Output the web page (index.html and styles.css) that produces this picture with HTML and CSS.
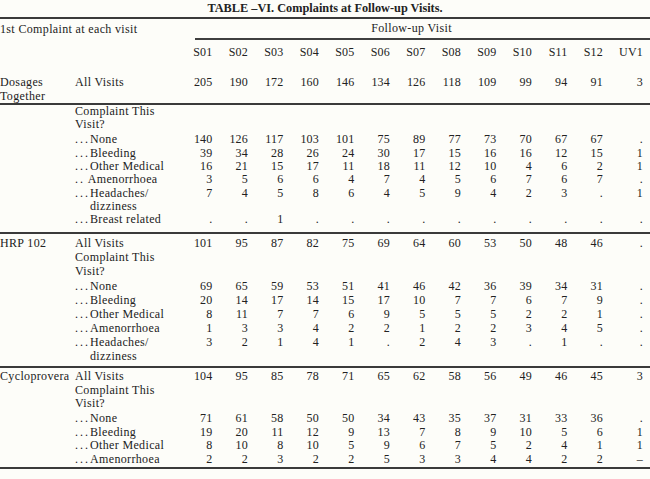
FILE: index.html
```html
<!DOCTYPE html>
<html lang="en">
<head>
<meta charset="utf-8">
<title>TABLE –VI. Complaints at Follow-up Visits.</title>
<link rel="stylesheet" href="styles.css">
</head>
<body>
<div class="page">
  <h1 class="title">TABLE –VI. Complaints at Follow-up Visits.</h1>
  <table class="t">
    <colgroup>
      <col class="c-grp"><col class="c-lbl">
      <col class="c-n"><col class="c-n"><col class="c-n"><col class="c-n"><col class="c-n"><col class="c-n">
      <col class="c-n"><col class="c-n"><col class="c-n"><col class="c-n"><col class="c-n"><col class="c-n">
      <col class="c-last">
    </colgroup>
    <thead>
      <tr class="cap">
        <th colspan="2" class="cap-l">1st Complaint at each visit</th>
        <th colspan="13" class="fv"><div>Follow-up Visit</div></th>
      </tr>
      <tr class="hdr">
        <th colspan="2"></th>
        <th class="n">S01</th><th class="n">S02</th><th class="n">S03</th><th class="n">S04</th><th class="n">S05</th><th class="n">S06</th>
        <th class="n">S07</th><th class="n">S08</th><th class="n">S09</th><th class="n">S10</th><th class="n">S11</th><th class="n">S12</th><th class="n">UV1</th>
      </tr>
    </thead>
    <tbody class="g0">
      <tr class="lead end">
        <td>Dosages<br>Together</td><td>All Visits</td>
        <td class="n">205</td><td class="n">190</td><td class="n">172</td><td class="n">160</td><td class="n">146</td><td class="n">134</td><td class="n">126</td><td class="n">118</td><td class="n">109</td><td class="n">99</td><td class="n">94</td><td class="n">91</td><td class="n">3</td>
      </tr>
    </tbody>
    <tbody class="g1">
      <tr><td></td><td>Complaint This</td><td colspan="13"></td></tr>
      <tr><td></td><td>Visit?</td><td colspan="13"></td></tr>
      <tr class="gap">
        <td></td><td><span class="d">...</span>None</td>
        <td class="n">140</td><td class="n">126</td><td class="n">117</td><td class="n">103</td><td class="n">101</td><td class="n">75</td><td class="n">89</td><td class="n">77</td><td class="n">73</td><td class="n">70</td><td class="n">67</td><td class="n">67</td><td class="n">.</td>
      </tr>
      <tr>
        <td></td><td><span class="d">...</span>Bleeding</td>
        <td class="n">39</td><td class="n">34</td><td class="n">28</td><td class="n">26</td><td class="n">24</td><td class="n">30</td><td class="n">17</td><td class="n">15</td><td class="n">16</td><td class="n">16</td><td class="n">12</td><td class="n">15</td><td class="n">1</td>
      </tr>
      <tr>
        <td></td><td><span class="d">...</span>Other Medical</td>
        <td class="n">16</td><td class="n">21</td><td class="n">15</td><td class="n">17</td><td class="n">11</td><td class="n">18</td><td class="n">11</td><td class="n">12</td><td class="n">10</td><td class="n">4</td><td class="n">6</td><td class="n">2</td><td class="n">1</td>
      </tr>
      <tr>
        <td></td><td><span class="d">..</span> Amenorrhoea</td>
        <td class="n">3</td><td class="n">5</td><td class="n">6</td><td class="n">6</td><td class="n">4</td><td class="n">7</td><td class="n">4</td><td class="n">5</td><td class="n">6</td><td class="n">7</td><td class="n">6</td><td class="n">7</td><td class="n">.</td>
      </tr>
      <tr>
        <td></td><td><span class="d">...</span>Headaches/<br><span class="ind">dizziness</span></td>
        <td class="n">7</td><td class="n">4</td><td class="n">5</td><td class="n">8</td><td class="n">6</td><td class="n">4</td><td class="n">5</td><td class="n">9</td><td class="n">4</td><td class="n">2</td><td class="n">3</td><td class="n">.</td><td class="n">1</td>
      </tr>
      <tr class="end">
        <td></td><td><span class="d">...</span>Breast related</td>
        <td class="n">.</td><td class="n">.</td><td class="n">1</td><td class="n">.</td><td class="n">.</td><td class="n">.</td><td class="n">.</td><td class="n">.</td><td class="n">.</td><td class="n">.</td><td class="n">.</td><td class="n">.</td><td class="n">.</td>
      </tr>
    </tbody>
    <tbody class="g2">
      <tr class="head">
        <td>HRP 102</td><td>All Visits</td>
        <td class="n">101</td><td class="n">95</td><td class="n">87</td><td class="n">82</td><td class="n">75</td><td class="n">69</td><td class="n">64</td><td class="n">60</td><td class="n">53</td><td class="n">50</td><td class="n">48</td><td class="n">46</td><td class="n">.</td>
      </tr>
      <tr><td></td><td>Complaint This</td><td colspan="13"></td></tr>
      <tr><td></td><td>Visit?</td><td colspan="13"></td></tr>
      <tr class="gap">
        <td></td><td><span class="d">...</span>None</td>
        <td class="n">69</td><td class="n">65</td><td class="n">59</td><td class="n">53</td><td class="n">51</td><td class="n">41</td><td class="n">46</td><td class="n">42</td><td class="n">36</td><td class="n">39</td><td class="n">34</td><td class="n">31</td><td class="n">.</td>
      </tr>
      <tr>
        <td></td><td><span class="d">...</span>Bleeding</td>
        <td class="n">20</td><td class="n">14</td><td class="n">17</td><td class="n">14</td><td class="n">15</td><td class="n">17</td><td class="n">10</td><td class="n">7</td><td class="n">7</td><td class="n">6</td><td class="n">7</td><td class="n">9</td><td class="n">.</td>
      </tr>
      <tr>
        <td></td><td><span class="d">...</span>Other Medical</td>
        <td class="n">8</td><td class="n">11</td><td class="n">7</td><td class="n">7</td><td class="n">6</td><td class="n">9</td><td class="n">5</td><td class="n">5</td><td class="n">5</td><td class="n">2</td><td class="n">2</td><td class="n">1</td><td class="n">.</td>
      </tr>
      <tr>
        <td></td><td><span class="d">...</span>Amenorrhoea</td>
        <td class="n">1</td><td class="n">3</td><td class="n">3</td><td class="n">4</td><td class="n">2</td><td class="n">2</td><td class="n">1</td><td class="n">2</td><td class="n">2</td><td class="n">3</td><td class="n">4</td><td class="n">5</td><td class="n">.</td>
      </tr>
      <tr class="end">
        <td></td><td><span class="d">...</span>Headaches/<br><span class="ind">dizziness</span></td>
        <td class="n">3</td><td class="n">2</td><td class="n">1</td><td class="n">4</td><td class="n">1</td><td class="n">.</td><td class="n">2</td><td class="n">4</td><td class="n">3</td><td class="n">.</td><td class="n">1</td><td class="n">.</td><td class="n">.</td>
      </tr>
    </tbody>
    <tbody class="g3">
      <tr class="head">
        <td>Cycloprovera</td><td>All Visits</td>
        <td class="n">104</td><td class="n">95</td><td class="n">85</td><td class="n">78</td><td class="n">71</td><td class="n">65</td><td class="n">62</td><td class="n">58</td><td class="n">56</td><td class="n">49</td><td class="n">46</td><td class="n">45</td><td class="n">3</td>
      </tr>
      <tr><td></td><td>Complaint This</td><td colspan="13"></td></tr>
      <tr><td></td><td>Visit?</td><td colspan="13"></td></tr>
      <tr class="gap">
        <td></td><td><span class="d">...</span>None</td>
        <td class="n">71</td><td class="n">61</td><td class="n">58</td><td class="n">50</td><td class="n">50</td><td class="n">34</td><td class="n">43</td><td class="n">35</td><td class="n">37</td><td class="n">31</td><td class="n">33</td><td class="n">36</td><td class="n">.</td>
      </tr>
      <tr>
        <td></td><td><span class="d">...</span>Bleeding</td>
        <td class="n">19</td><td class="n">20</td><td class="n">11</td><td class="n">12</td><td class="n">9</td><td class="n">13</td><td class="n">7</td><td class="n">8</td><td class="n">9</td><td class="n">10</td><td class="n">5</td><td class="n">6</td><td class="n">1</td>
      </tr>
      <tr>
        <td></td><td><span class="d">...</span>Other Medical</td>
        <td class="n">8</td><td class="n">10</td><td class="n">8</td><td class="n">10</td><td class="n">5</td><td class="n">9</td><td class="n">6</td><td class="n">7</td><td class="n">5</td><td class="n">2</td><td class="n">4</td><td class="n">1</td><td class="n">1</td>
      </tr>
      <tr class="end">
        <td></td><td><span class="d">...</span>Amenorrhoea</td>
        <td class="n">2</td><td class="n">2</td><td class="n">3</td><td class="n">2</td><td class="n">2</td><td class="n">5</td><td class="n">3</td><td class="n">3</td><td class="n">4</td><td class="n">4</td><td class="n">2</td><td class="n">2</td><td class="n">–</td>
      </tr>
    </tbody>
  </table>
</div>
</body>
</html>
```

FILE: styles.css
```css
html, body {
  margin: 0;
  padding: 0;
  background: #fdfdf9;
}

body {
  color: #222;
  font-family: "Liberation Serif", "Times New Roman", serif;
  font-size: 12px;
}

.page {
  width: 650px;
}

.title {
  margin: 0;
  height: 17px;
  line-height: 17px;
  font-size: 12.3px;
  font-weight: bold;
  text-align: center;
  border-bottom: 2px solid #3a3a3a;
}

.t {
  width: 650px;
  table-layout: fixed;
  border-collapse: separate;
  border-spacing: 0;
}

.c-grp { width: 75px; }
.c-lbl { width: 102px; }
.c-n { width: 35.5px; }
.c-last { width: 47px; }

.t th,
.t td {
  padding: 0;
  font-weight: normal;
  text-align: left;
  vertical-align: top;
  white-space: nowrap;
  letter-spacing: 0.35px;
}

.t .n {
  text-align: right;
  letter-spacing: 0.2px;
}

.t .n:last-child {
  padding-right: 7px;
}

/* header */
.cap th {
  height: 21px;
  line-height: 19px;
  vertical-align: middle;
}

.cap .cap-l {
  line-height: 21px;
}

.fv div {
  margin-left: 18px;
  padding-right: 22px;
  text-align: center;
  line-height: 19px;
  border-bottom: 2px solid #3f3f3f;
}

.hdr th {
  height: 24px;
  vertical-align: middle;
}

.hdr th.n {
  text-align: right;
}

/* body groups */
.g0 td {
  line-height: 14px;
}

.lead td {
  padding-top: 11px;
}

.g1 td { line-height: 13.35px; }
.g2 td { line-height: 14px; }
.g3 td { line-height: 13.5px; }

.g1 tr.gap td { padding-top: 1.5px; }
.g2 tr.gap td { padding-top: 1px; }
.g3 tr.gap td { padding-top: 1.5px; }

.g2 tr.head td { padding-top: 1.5px; }
.g3 tr.head td { padding-top: 2px; }

tr.end td {
  border-bottom: 2px solid #3a3a3a;
}

.g1 tr.end td { padding-bottom: 5.8px; }
.g2 tr.end td { padding-bottom: 3.5px; }
.g3 tr.end td { padding-bottom: 1px; }

.d {
  letter-spacing: 2px;
}

.ind {
  padding-left: 15px;
}
```
